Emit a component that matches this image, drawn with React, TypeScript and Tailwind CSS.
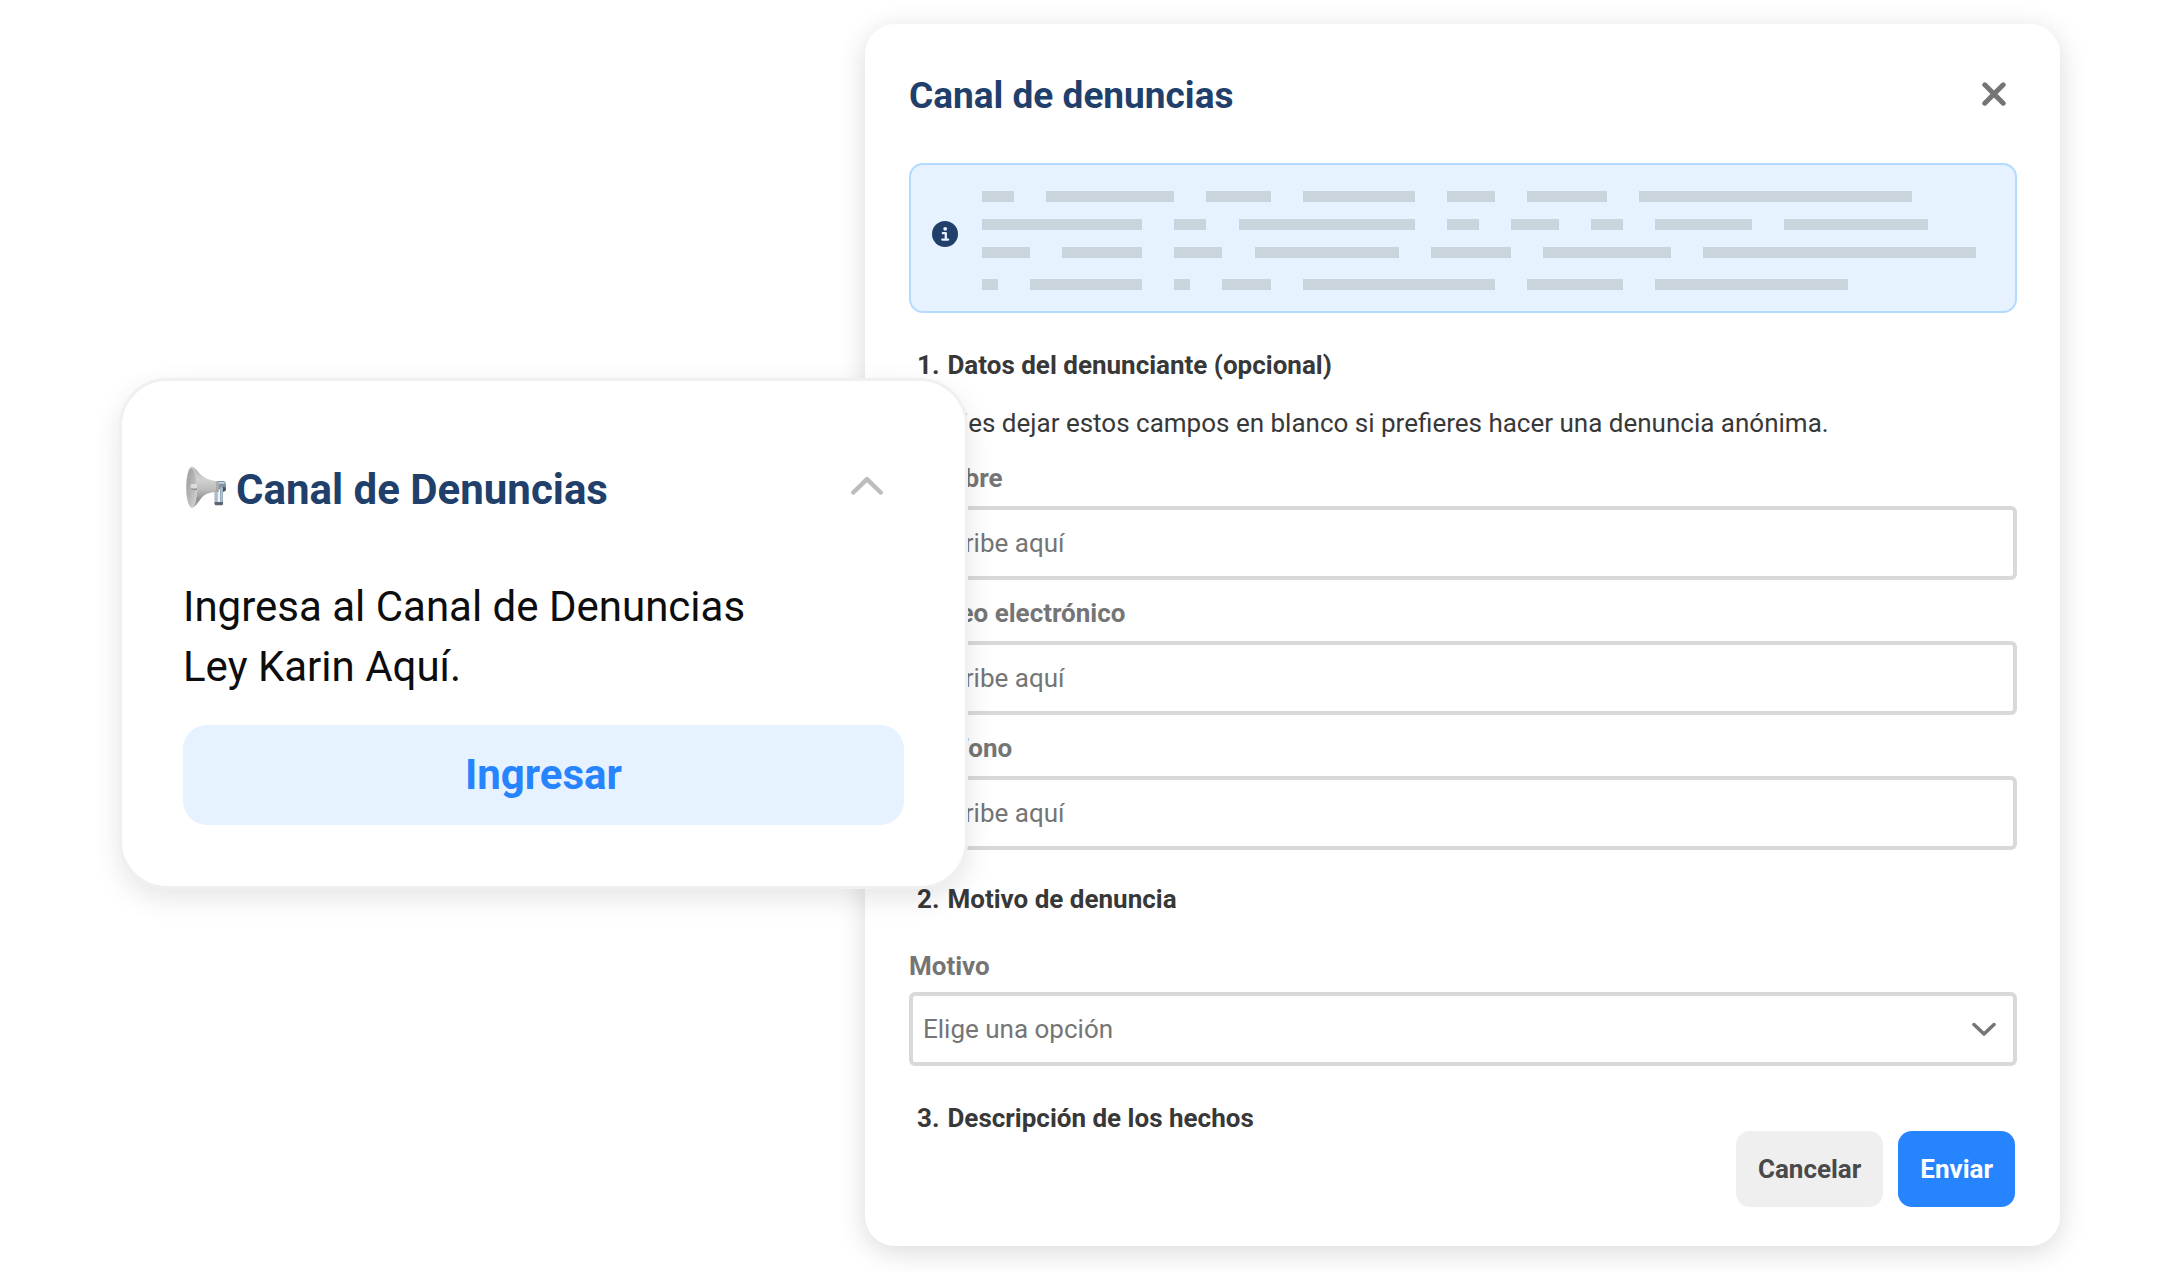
import { useId } from "react";

const SKELETON_UNITS = 62;
const SKELETON_ROWS = [
  { bars: [2, 8, 4, 7, 3, 5, 17], className: "flex" },
  { bars: [10, 2, 11, 2, 3, 2, 6, 9], className: "mt-[17px] flex" },
  { bars: [3, 5, 3, 9, 5, 8, 17], className: "mt-[17px] flex" },
  { bars: [1, 7, 1, 3, 12, 6, 12], className: "mt-[21px] flex" },
];

function percent(units: number) {
  return `${(units / SKELETON_UNITS) * 100}%`;
}

function Megaphone() {
  return (
    <svg className="h-12 w-11 shrink-0" viewBox="69 76 132 144" aria-hidden="true">
      <defs>
        <linearGradient id="horn" x1="0" y1="0" x2="0" y2="1">
          <stop offset="0" stopColor="#a9a9a9" />
          <stop offset="0.3" stopColor="#d2d2d2" />
          <stop offset="0.55" stopColor="#bebebe" />
          <stop offset="0.8" stopColor="#939393" />
          <stop offset="1" stopColor="#adadad" />
        </linearGradient>
        <linearGradient id="mouth" x1="0" y1="0" x2="1" y2="1">
          <stop offset="0" stopColor="#9a9a9a" />
          <stop offset="0.5" stopColor="#b4b4b4" />
          <stop offset="1" stopColor="#d0d2d5" />
        </linearGradient>
        <linearGradient id="grip" x1="0" y1="0" x2="1" y2="0">
          <stop offset="0" stopColor="#5d7183" />
          <stop offset="0.35" stopColor="#dfeaf4" />
          <stop offset="0.6" stopColor="#8fa3b6" />
          <stop offset="1" stopColor="#a5bbce" />
        </linearGradient>
      </defs>
      <path d="M170 121h20c5 0 8 5 8 11v13l-6 8h-22z" fill="#8193a4" />
      <path d="M173 124h17c3 0 4 3 4 5h-21z" fill="#c3d6e6" />
      <path d="M189 138l8 3v9l-8 3z" fill="#454e57" />
      <path d="M164 146h9v44h-9z" fill="#6d8296" />
      <path d="M166 146h4v40h-4z" fill="#c9d9e7" />
      <path d="M180 140h9v50h-9z" fill="url(#grip)" />
      <path d="M173 146h7v38h-7z" fill="#eef3f8" />
      <path d="M164 184h25v5c0 3-2 5-5 5h-15c-3 0-5-2-5-5z" fill="#5b6670" />
      <path
        d="M95 78c12 1 22 22 38 32 12 8 28 10 42 14 3 8 3 22 0 30-14-1-29 1-41 9-15 10-24 37-39 38z"
        fill="url(#horn)"
      />
      <path d="M166 122l9 2c3 8 3 22 0 30l-9-1c3-9 3-22 0-31z" fill="#9a9a9a" opacity="0.6" />
      <ellipse cx="95" cy="139.500" rx="17" ry="61.500" fill="#cfcfcf" />
      <ellipse cx="94" cy="139.500" rx="14.500" ry="57" fill="url(#mouth)" />
      <path d="M94 131c6-3 12-2 17 0v15c-5 2-12 2-17-1-3-4-3-10 0-14z" fill="#dcdcdc" />
      <path d="M94 142c6 3 12 3 17 1v4c-5 2-12 2-17-1z" fill="#8a8a8a" />
    </svg>
  );
}

function Skeleton() {
  return (
    <div className="min-w-0 flex-1" aria-hidden="true">
      {SKELETON_ROWS.map((row, r) => (
        <div key={r} className={row.className}>
          {row.bars.map((units, i) => (
            <span
              key={i}
              className="h-[11px] shrink-0 bg-[#c9d4dc]"
              style={{ width: percent(units), marginRight: i < row.bars.length - 1 ? percent(2) : 0 }}
            />
          ))}
        </div>
      ))}
    </div>
  );
}

function SectionTitle({ number, children }: { number: number; children: string }) {
  return (
    <h3 className="flex gap-2 pl-2 text-[26px] leading-8 font-bold text-[#383838]">
      <span>{number}.</span>
      <span>{children}</span>
    </h3>
  );
}

function TextField({ label, type }: { label: string; type: string }) {
  const id = useId();
  return (
    <div className="flex flex-col gap-3">
      <label htmlFor={id} className="text-[26px] leading-8 font-bold text-[#757575]">
        {label}
      </label>
      <input
        id={id}
        type={type}
        placeholder="Escribe aquí"
        className="h-[74px] w-full rounded-md border-4 border-[#d9d9d9] bg-white px-[10px] text-[26px] leading-8 text-[#383838] placeholder:text-[#757575]"
      />
    </div>
  );
}

function AccessCard() {
  return (
    <section className="z-10 col-start-2 col-end-4 row-start-1 mt-[354px] self-start rounded-[48px] border-[3px] border-[#f0f0f0] bg-white px-[61px] pt-[79px] pb-[61px] shadow-[0_10px_28px_rgba(0,0,0,0.10)]">
      <div className="flex items-center justify-between pr-[21px]">
        <h2 className="flex items-center gap-[9px] text-[42px] leading-[60px] font-bold text-[#213f6b]">
          <Megaphone />
          Canal de Denuncias
        </h2>
        <button type="button" aria-label="Contraer" className="text-[#bdbdbd]">
          <svg className="h-7 w-8" viewBox="0 0 32 28" fill="none" stroke="currentColor" strokeWidth="4.500" strokeLinecap="round" strokeLinejoin="round" aria-hidden="true">
            <path d="M2.300 16.500 16 3.200 29.700 16.500" />
          </svg>
        </button>
      </div>
      <p className="mt-[57px] text-[42px] leading-[60px] text-[#0d0d0d]">
        Ingresa al Canal de Denuncias
        <br />
        Ley Karin Aquí.
      </p>
      <button type="button" className="mt-7 h-[100px] w-full rounded-3xl bg-[#e6f2ff] text-[42px] leading-[60px] font-bold text-[#2684ff]">
        Ingresar
      </button>
    </section>
  );
}

function ComplaintForm() {
  return (
    <form
      className="col-start-3 col-end-5 row-start-1 rounded-[30px] bg-white pt-[50px] pr-[43px] pb-[39px] pl-11 shadow-[0_6px_28px_rgba(0,0,0,0.15)]"
      onSubmit={(e) => e.preventDefault()}
    >
      <header className="flex items-center justify-between pr-[11px]">
        <h1 className="text-[37px] leading-[44px] font-bold text-[#213f6b]">Canal de denuncias</h1>
        <button type="button" aria-label="Cerrar" className="text-[#757575]">
          <svg className="h-7 w-6" viewBox="0 0 24 28" fill="none" stroke="currentColor" strokeWidth="5" strokeLinecap="round" aria-hidden="true">
            <path d="M2.800 2.800 21.200 21.200M21.200 2.800 2.800 21.200" />
          </svg>
        </button>
      </header>

      <div className="mt-[45px] flex h-[150px] gap-6 rounded-[14px] border-2 border-[#b3dbff] bg-[#e6f2ff] pt-[26px] pr-[39px] pl-[21px]">
        <svg className="mt-[30px] size-[26px] shrink-0" viewBox="0 0 26 26" aria-hidden="true">
          <circle cx="13" cy="13" r="13" fill="#213f6b" />
          <circle cx="13.200" cy="7.800" r="1.900" fill="#e6f2ff" />
          <path d="M10.800 12.200h3v6.200M10.300 18.600h5.800" fill="none" stroke="#e6f2ff" strokeWidth="2.300" strokeLinecap="round" strokeLinejoin="round" />
        </svg>
        <Skeleton />
      </div>

      <section className="mt-9">
        <SectionTitle number={1}>Datos del denunciante (opcional)</SectionTitle>
        <p className="mt-[26px] text-[26px] leading-8 text-[#383838]">
          Puedes dejar estos campos en blanco si prefieres hacer una denuncia anónima.
        </p>
        <div className="mt-[23px] flex flex-col gap-[17px]">
          <TextField label="Nombre" type="text" />
          <TextField label="Correo electrónico" type="email" />
          <TextField label="Teléfono" type="tel" />
        </div>
      </section>

      <section className="mt-[33px]">
        <SectionTitle number={2}>Motivo de denuncia</SectionTitle>
        <div className="mt-[35px] flex flex-col gap-[10px]">
          <label htmlFor="motivo" className="text-[26px] leading-8 font-bold text-[#757575]">
            Motivo
          </label>
          <div className="relative">
            <select
              id="motivo"
              defaultValue=""
              className="block h-[74px] w-full appearance-none rounded-md border-4 border-[#d9d9d9] bg-white px-[10px] text-[26px] leading-8 text-[#757575]"
            >
              <option value="">Elige una opción</option>
            </select>
            <svg className="pointer-events-none absolute top-1/2 right-[21px] h-4 w-6 -translate-y-1/2" viewBox="0 0 24 16" fill="none" stroke="#757575" strokeWidth="3.500" strokeLinecap="round" strokeLinejoin="round" aria-hidden="true">
              <path d="M2 3.500 12 13 22 3.500" />
            </svg>
          </div>
        </div>
      </section>

      <footer className="mt-9 flex items-start justify-between">
        <SectionTitle number={3}>Descripción de los hechos</SectionTitle>
        <div className="mt-[29px] flex gap-[15px] pr-[2px] text-[26px] leading-8 font-bold">
          <button type="button" className="h-[76px] rounded-[14px] bg-[#efefef] px-[22px] text-[#4a4a4a]">
            Cancelar
          </button>
          <button type="submit" className="h-[76px] rounded-[14px] bg-[#2684ff] px-[22px] text-white">
            Enviar
          </button>
        </div>
      </footer>
    </form>
  );
}

export default function App() {
  return (
    <main className="grid min-h-screen grid-cols-[minmax(0,119fr)_minmax(0,746fr)_minmax(0,103fr)_minmax(0,1092fr)_minmax(0,120fr)] items-start bg-white py-6 font-['Roboto',sans-serif]">
      <ComplaintForm />
      <AccessCard />
    </main>
  );
}
